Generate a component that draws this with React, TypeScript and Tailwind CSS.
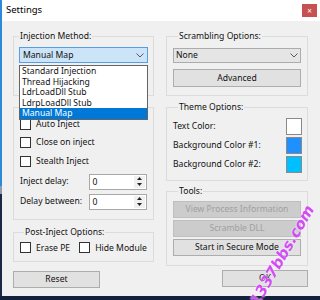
import React from "react";

const font = "font-['Noto_Sans',sans-serif]";

const Chevron = () => (
  <svg width="8" height="5" viewBox="0 0 8 5" className="shrink-0">
    <polyline points="0.5,0.5 4,4 7.5,0.5" fill="none" stroke="#5a5a5a" strokeWidth="1" />
  </svg>
);

const Check = ({ label }: { label: string }) => (
  <div className="flex items-center gap-[5px] whitespace-nowrap">
    <span className="w-[11px] h-[11px] bg-white border border-[#333333] shrink-0" />
    <span>{label}</span>
  </div>
);

const Spin = ({ label }: { label: string }) => (
  <div className="flex items-center h-[20px]">
    <span className="w-[70px] whitespace-nowrap">{label}</span>
    <div className="flex h-[16px] w-[58px] bg-white border border-[#a8a8a8]">
      <span className="flex-1 pl-[2px] leading-[14px]">0</span>
      <div className="flex flex-col w-[11px] my-[1px] mr-[1px] bg-[#f0f0f0]">
        <div className="flex-1 flex items-center justify-center">
          <svg width="5" height="3" viewBox="0 0 5 3"><polygon points="2.5,0 5,3 0,3" fill="#222" /></svg>
        </div>
        <div className="flex-1 flex items-center justify-center">
          <svg width="5" height="3" viewBox="0 0 5 3"><polygon points="0,0 5,0 2.5,3" fill="#222" /></svg>
        </div>
      </div>
    </div>
  </div>
);

const Btn = ({ label, disabled }: { label: string; disabled?: boolean }) => (
  <div
    className={
      disabled
        ? "h-[17px] flex items-center justify-center whitespace-nowrap bg-[#cccccc] border border-[#bfbfbf] text-[#a0a0a0]"
        : "h-[17px] flex items-center justify-center whitespace-nowrap bg-[#e1e1e1] border border-[#adadad]"
    }
  >
    {label}
  </div>
);

const Swatch = ({ label, color }: { label: string; color: string }) => (
  <div className="flex items-center justify-between h-[17px] pr-[5px]">
    <span className="whitespace-nowrap">{label}</span>
    <span className="w-[16px] h-[17px] border border-[#8a8a8a]" style={{ background: color }} />
  </div>
);

const items = ["Standard Injection", "Thread Hijacking", "LdrLoadDll Stub", "LdrpLoadDll Stub", "Manual Map"];

export default function App() {
  return (
    <div className={`relative w-[320px] h-[300px] overflow-hidden bg-[#15213c] flex flex-col text-[8.6px] text-[#111] ${font}`}>
      <div className="flex h-[296px]">
        <div className="w-[2px] flex flex-col">
          <div className="h-[186px] bg-[#2e8ad8]" />
          <div className="h-[8px] bg-[#8a9bb0]" />
          <div className="flex-1 bg-[#1a2746]" />
        </div>
        <div className="flex-1 flex flex-col bg-[#f0f0f0]">
          <div className="h-[21px] bg-white flex items-center justify-between pl-[4px] pr-[3px]">
            <span className="text-[9.5px] text-black">Settings</span>
            <div className="w-[15px] h-[13px] bg-[#c75050] flex items-center justify-center text-white text-[8px] leading-none">
              ×
            </div>
          </div>

          <div className="flex gap-[12px] pl-[11px] pt-[9px]">
            {/* left column */}
            <div className="w-[141px] flex flex-col">
              <fieldset className="border border-[#dcdcdc] px-[5px] pt-[5px] pb-[32px] relative">
                <legend className="px-[1px] leading-[12px] whitespace-nowrap">Injection Method:</legend>
                <div className="h-[16px] flex items-center justify-between px-[3px] bg-[#cce4f7] border border-[#569de5]">
                  <span>Manual Map</span>
                  <Chevron />
                </div>
                <div className="absolute left-[5px] top-[23px] w-[129px] bg-white border border-[#646464] z-10">
                  {items.map((it) => (
                    <div
                      key={it}
                      className={
                        it === "Manual Map"
                          ? "h-[10.5px] leading-[10.5px] pl-[2px] bg-[#0078d7] text-white"
                          : "h-[10.5px] leading-[10.5px] pl-[2px]"
                      }
                    >
                      {it}
                    </div>
                  ))}
                </div>
              </fieldset>

              <div className="mt-[11px] h-[113px] border border-[#dcdcdc] px-[6px] pt-[7px] flex flex-col">
                <div className="h-[18.5px] flex items-center"><Check label="Auto Inject" /></div>
                <div className="h-[18.5px] flex items-center"><Check label="Close on inject" /></div>
                <div className="h-[18.5px] flex items-center"><Check label="Stealth Inject" /></div>
                <div className="mt-[1px]"><Spin label="Inject delay:" /></div>
                <Spin label="Delay between:" />
              </div>

              <fieldset className="mt-[6px] border border-[#dcdcdc] px-[6px] pt-[2px] pb-[5px]">
                <legend className="px-[1px] ml-[4px] leading-[12px] whitespace-nowrap">Post-Inject Options:</legend>
                <div className="h-[16px] flex items-center gap-[9px]">
                  <Check label="Erase PE" />
                  <Check label="Hide Module" />
                </div>
              </fieldset>

              <div className="mt-[9px] w-[87px]">
                <Btn label="Reset" />
              </div>
            </div>

            {/* right column */}
            <div className="w-[142px] flex flex-col">
              <fieldset className="border border-[#dcdcdc] px-[6px] pt-[6px] pb-[8px]">
                <legend className="px-[1px] ml-[5px] leading-[12px] whitespace-nowrap">Scrambling Options:</legend>
                <div className="h-[15px] flex items-center justify-between px-[2px] bg-[#e5e5e5] border border-[#acacac]">
                  <span>None</span>
                  <Chevron />
                </div>
                <div className="mt-[6px]">
                  <div className="h-[18px] flex items-center justify-center bg-[#e1e1e1] border border-[#adadad]">Advanced</div>
                </div>
              </fieldset>

              <fieldset className="mt-[5px] border border-[#dcdcdc] pl-[6px] pr-0 pt-[5px] pb-[7px] flex flex-col gap-[2px]">
                <legend className="px-[1px] ml-[5px] leading-[12px] whitespace-nowrap">Theme Options:</legend>
                <Swatch label="Text Color:" color="#ffffff" />
                <Swatch label="Background Color #1:" color="#1e90ff" />
                <Swatch label="Background Color #2:" color="#00bfff" />
              </fieldset>

              <fieldset className="mt-[4px] border border-[#dcdcdc] px-[6px] pt-[4px] pb-[9px] flex flex-col gap-[2px]">
                <legend className="px-[1px] ml-[5px] leading-[12px]">Tools:</legend>
                <Btn label="View Process Information" disabled />
                <Btn label="Scramble DLL" disabled />
                <Btn label="Start in Secure Mode" />
              </fieldset>

              <div className="mt-[4px] ml-[56px] w-[86px]">
                <Btn label="OK" />
              </div>
            </div>
          </div>
        </div>
      </div>
      <div className="flex-1 bg-[#15213c]" />

      <span className="absolute left-[226px] top-[244px] -rotate-[60deg] text-[15px] font-bold italic text-[#d24cf5] [text-shadow:0_0_2px_#ffffff] font-['DejaVu_Sans',sans-serif] whitespace-nowrap pointer-events-none">
        1337bbs.com
      </span>
    </div>
  );
}
